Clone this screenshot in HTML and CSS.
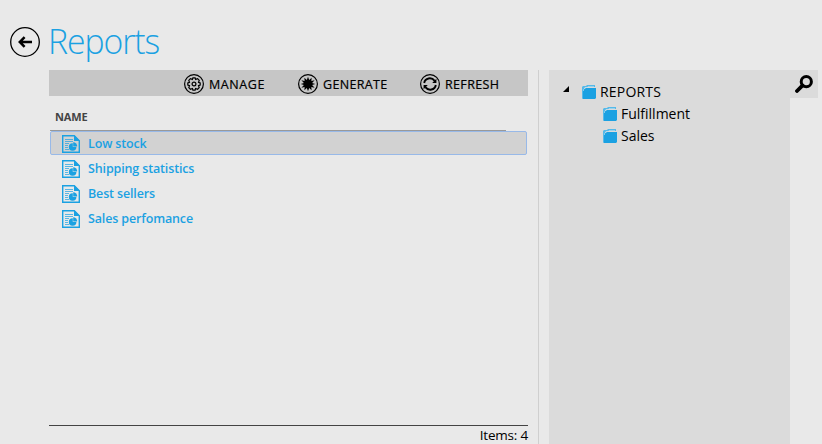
FILE: index.html
```html
<!DOCTYPE html>
<html lang="en">
<head>
<meta charset="utf-8">
<title>Reports</title>
<link rel="stylesheet" href="styles.css">
</head>
<body>
<svg width="0" height="0" class="defs">
  <symbol id="report" viewBox="0 0 18 18">
    <path d="M.7.7H12.3L17.3 5.7V17.3H.7Z" fill="none" stroke="#1ba1e2" stroke-width="1.4"/>
    <path d="M12 0L18 6H12Z" fill="#1ba1e2"/>
    <path d="M3 4.5H11M3 6.5H11M3 8.5H7M3 10.5H6M3 12.5H6M3 14.5H7" stroke="#1ba1e2" stroke-width="1" opacity=".7"/>
    <path d="M10.8 8.2A3.8 3.8 0 1 0 14.4 12H10.8Z" fill="#1ba1e2"/>
    <path d="M11.2 7.2A4 4 0 0 1 15.2 11.6H11.2Z" fill="#1ba1e2"/>
  </symbol>
  <symbol id="folder" viewBox="0 0 14 14">
    <path d="M0 13V2L1 1H4L5 0H13V2H3L2 4V13Z" fill="#55b9e9"/>
    <path d="M1 13V5L4 3H14V13L13 14H1L0 13Z" fill="#1ba1e2"/>
    <path d="M1.5 6V4.5L3.5 2.5H5L6 1.5H12" fill="none" stroke="#b5dcef" stroke-width=".7"/>
  </symbol>
</svg>
<header class="header">
  <svg class="back" viewBox="0 0 30 30"><circle cx="15" cy="15" r="14.3" fill="none" stroke="#000" stroke-width="1.3"/><path d="M22 15H10M14.6 10.2L9.8 15L14.6 19.8" fill="none" stroke="#000" stroke-width="2.5"/></svg>
  <h1 class="title">Reports</h1>
</header>
<div class="content">
  <main class="list">
    <div class="toolbar">
      <div class="tool manage"><svg viewBox="0 0 20 20"><circle cx="10" cy="10" r="9.4" class="ring"/><path d="M8.9 3.8H11.1L11.6 5.4L13.6 4.7L15.2 6.4L14.5 8.3L16.2 9V11L14.5 11.7L15.2 13.6L13.6 15.2L11.6 14.5L11.1 16.2H8.9L8.4 14.5L6.4 15.2L4.8 13.6L5.5 11.7L3.8 11V9L5.5 8.3L4.8 6.4L6.4 4.7L8.4 5.4Z" class="ring"/><circle cx="10" cy="10" r="1.9" class="ring"/></svg><span>MANAGE</span></div>
      <div class="tool generate"><svg viewBox="0 0 20 20"><circle cx="10" cy="10" r="9.4" class="ring"/><path d="M10 2.8L11.2 6.1L13.6 3.8L13.4 7L16.6 6.2L14.1 8.9L17.3 10L14.1 11.1L16.6 13.8L13.3 13L13.6 16.2L11.2 13.9L10 17.2L8.8 13.9L6.4 16.2L6.6 13L3.4 13.8L5.9 11.1L2.7 10L5.9 8.9L3.4 6.2L6.6 7L6.4 3.8L8.8 6.1Z"/></svg><span>GENERATE</span></div>
      <div class="tool refresh"><svg viewBox="0 0 20 20"><circle cx="10" cy="10" r="9.4" class="ring"/><path d="M4.2 9C5 3.9 11.5 2.7 14.7 6.8M15.8 11C15 16.1 8.5 17.3 5.3 13.2" fill="none" stroke="#000" stroke-width="1.9"/><path d="M16.4 4.8V9H12.2ZM3.6 15.2V11H7.8Z"/></svg><span>REFRESH</span></div>
    </div>
    <div class="column-head"><span>NAME</span></div>
    <div class="rows">
      <div class="row selected"><svg><use href="#report"/></svg><span>Low stock</span></div>
      <div class="row"><svg><use href="#report"/></svg><span>Shipping statistics</span></div>
      <div class="row"><svg><use href="#report"/></svg><span>Best sellers</span></div>
      <div class="row"><svg><use href="#report"/></svg><span>Sales perfomance</span></div>
    </div>
    <footer class="footer">Items: 4</footer>
  </main>
  <aside class="tree">
    <div class="node root"><svg class="arrow" viewBox="0 0 6 6"><path d="M6 0V6H0Z"/></svg><svg class="folder"><use href="#folder"/></svg><span class="root-label">REPORTS</span></div>
    <div class="node child"><svg class="folder"><use href="#folder"/></svg><span>Fulfillment</span></div>
    <div class="node child"><svg class="folder"><use href="#folder"/></svg><span>Sales</span></div>
  </aside>
  <div class="search"><svg viewBox="0 0 18 18"><circle cx="11.3" cy="6.7" r="5.1" fill="none" stroke="#000" stroke-width="3"/><path d="M7.6 10.4L2 16" stroke="#000" stroke-width="3.8" stroke-linecap="round"/></svg></div>
</div>
</body>
</html>
```
FILE: styles.css
```css
* { box-sizing: border-box; }
body {
  margin: 0;
  height: 444px;
  overflow: hidden;
  display: flex;
  flex-direction: column;
  background: #e9e9e9;
  color: #000;
  font-family: "Open Sans", "Noto Sans", sans-serif;
}
.defs { position: absolute; }
svg { display: block; flex: none; }
.header { display: flex; height: 70px; padding: 27px 0 0 10px; }
.back { width: 30px; height: 30px; }
.title {
  margin: -10px 0 0 8px;
  font-size: 35.5px;
  line-height: 46px;
  font-weight: 300;
  letter-spacing: -1.1px;
  transform: scaleX(.95);
  transform-origin: left;
  color: #1ba1e2;
}
.content { display: flex; height: 374px; padding-left: 49px; align-items: flex-start; }
.list { width: 490px; height: 374px; padding-right: 10px; border-right: 1px solid #cfcfcf; display: flex; flex-direction: column; }
.toolbar { display: flex; height: 26px; background: #c6c6c6; padding-left: 135px; align-items: center; }
.tool { display: flex; align-items: center; gap: 5px; font-size: 12.5px; font-weight: 500; line-height: 18px; white-space: nowrap; margin-top: 2px; }
.tool svg { width: 20px; height: 20px; }
.ring { fill: none; stroke: #000; stroke-width: 1.2; }
.manage { width: 114px; }
.generate { width: 122px; }
.tool span { letter-spacing: .35px; padding-top: 1px; -webkit-text-stroke: .2px #000; }
.manage span { letter-spacing: .6px; }
.column-head {
  height: 35px;
  width: 456px;
  margin-left: 1px;
  border-bottom: 1px solid #999;
  padding: 13px 0 0 5px;
  font-size: 11px;
  line-height: 16px;
  font-weight: 700;
  letter-spacing: -.1px;
  color: #444;
}
.rows { padding: 0 1px; flex: 1; }
.row {
  display: flex;
  align-items: center;
  height: 25px;
  gap: 8px;
  padding: 0 0 1px 12px;
  font-size: 12.5px;
  font-weight: 600;
  letter-spacing: -.14px;
  color: #1ba1e2;
}
.row svg { width: 18px; height: 18px; margin-top: 1px; }
.row.selected { height: 24px; margin-bottom: 1px; padding: 0 0 0 11px; background: #d2d2d2; border: 1px solid #98b9e8; border-radius: 2px; }
.footer { height: 19px; border-top: 1px solid #444; text-align: right; font-size: 13.5px; line-height: 19px; letter-spacing: -.2px; }
.tree { margin-left: 10px; width: 241px; height: 374px; padding: 10px 0 0 14px; background: #dbdbdb; }
.node { display: flex; height: 22px; align-items: center; font-size: 14px; }
.arrow { width: 6px; height: 6px; margin: -4px 13px 0 0; }
.folder { width: 14px; height: 14px; margin: 1px 4px 0 0; }
.root .folder { margin-right: 4px; }
.root-label { letter-spacing: .2px; }
.child { padding-left: 40px; }
.search { width: 28px; height: 28px; background: #dbdbdb; padding: 5px; }
.search svg { width: 18px; height: 18px; }
```
